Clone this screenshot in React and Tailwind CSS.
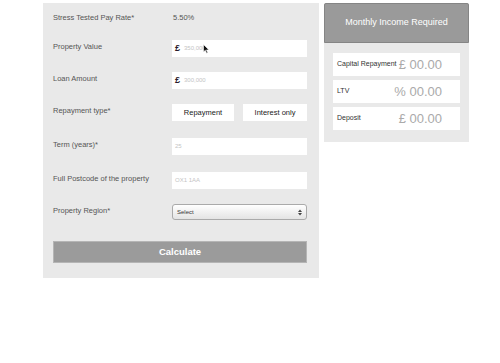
import React from "react";

const font = { fontFamily: '"Liberation Sans", Arial, sans-serif' };

function Row({ label, children, h }) {
  return (
    <div className={`flex items-center ${h}`}>
      <div className="w-[119px] pb-[3px] text-[7.5px] text-[#555]">{label}</div>
      <div className="flex-1">{children}</div>
    </div>
  );
}

function Input({ prefix, placeholder }) {
  return (
    <div className="h-[17px] bg-white flex items-center px-[3px] text-[6px] text-[#c4c4c4]">
      {prefix && <span className="text-[9px] font-bold text-[#2a1a2a] mr-[4px]">£</span>}
      <span>{placeholder}</span>
    </div>
  );
}

function Result({ label, value }) {
  return (
    <div className="h-[23px] bg-white flex items-center justify-between pl-[4px] pr-[18px]">
      <span className="text-[7px] text-[#333]">{label}</span>
      <span className="text-[13px] text-[#aaa]">{value}</span>
    </div>
  );
}

export default function App() {
  return (
    <div className="w-[500px] h-[363px] bg-white relative" style={font}>
      <div className="flex items-start gap-[5px] pt-[3px] pl-[43px]">
        <div className="w-[276px] h-[275px] bg-[#e9e9e9] pl-[10px] pr-[12px] pt-[2px]">
          <Row label="Stress Tested Pay Rate*" h="h-[28px]">
            <span className="text-[7.5px] text-[#555] pl-[1px] pb-[3px] block">5.50%</span>
          </Row>
          <Row label="Property Value" h="h-[31px]">
            <Input prefix placeholder="350,000" />
          </Row>
          <Row label="Loan Amount" h="h-[33px]">
            <Input prefix placeholder="300,000" />
          </Row>
          <Row label="Repayment type*" h="h-[31px]">
            <div className="flex justify-between">
              <div className="w-[62px] h-[17px] bg-white flex items-center justify-center text-[7.5px] text-[#222]">Repayment</div>
              <div className="w-[64px] h-[17px] bg-white flex items-center justify-center text-[7.5px] text-[#222]">Interest only</div>
            </div>
          </Row>
          <Row label="Term (years)*" h="h-[37px]">
            <Input placeholder="25" />
          </Row>
          <Row label="Full Postcode of the property" h="h-[31px]">
            <Input placeholder="OX1 1AA" />
          </Row>
          <Row label="Property Region*" h="h-[32px]">
            <div className="h-[16px] rounded-[3px] border border-[#aaa] bg-gradient-to-b from-white to-[#e4e4e4] flex items-center justify-between px-[4px]">
              <span className="text-[6px] text-[#333]">Select</span>
              <svg width="4" height="7" viewBox="0 0 4 7">
                <path d="M0 3 L2 0.5 L4 3 Z M0 4 L2 6.5 L4 4 Z" fill="#444" />
              </svg>
            </div>
          </Row>
          <div className="mt-[13px] h-[22px] bg-[#9b9b9b] border border-[#b5b5b5] flex items-center justify-center text-[9.5px] font-bold text-white">
            Calculate
          </div>
        </div>
        <div className="w-[145px] h-[139px] bg-[#e9e9e9]">
          <div className="h-[40px] bg-[#9a9a9a] border border-[#858585] rounded-t-[2px] flex items-center justify-center text-[9px] text-white">
            Monthly Income Required
          </div>
          <div className="flex flex-col gap-[4px] pl-[9px] pr-[9px] pt-[10px]">
            <Result label="Capital Repayment" value="£ 00.00" />
            <Result label="LTV" value="% 00.00" />
            <Result label="Deposit" value="£ 00.00" />
          </div>
        </div>
      </div>
      <svg className="absolute left-[203px] top-[44px]" width="7" height="10" viewBox="0 0 7 10">
        <path d="M0.5 0.5 L0.5 8 L2.3 6.3 L3.6 9.3 L4.8 8.8 L3.5 5.9 L6 5.9 Z" fill="#111" stroke="#fff" strokeWidth="0.6" />
      </svg>
    </div>
  );
}
